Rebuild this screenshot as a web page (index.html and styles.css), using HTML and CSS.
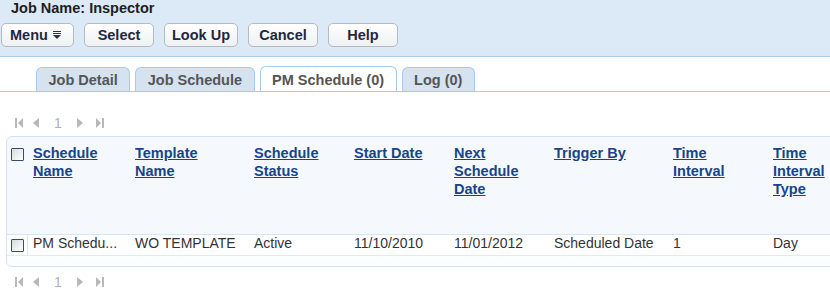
FILE: index.html
```html
<!DOCTYPE html>
<html>
<head>
<meta charset="utf-8">
<link rel="stylesheet" href="styles.css">
</head>
<body>
<div class="header">
  <div class="title">Job Name: Inspector</div>
  <div class="toolbar">
    <button class="btn btn-menu">Menu <svg class="menu-ico" width="8" height="8" viewBox="0 0 8 8"><rect x="0" y="0" width="8" height="1"/><rect x="0" y="2" width="8" height="1"/><polygon points="0,4 8,4 4,8"/></svg></button>
    <button class="btn">Select</button>
    <button class="btn">Look Up</button>
    <button class="btn">Cancel</button>
    <button class="btn">Help</button>
  </div>
</div>

<div class="tabs">
  <div class="tab">Job Detail</div>
  <div class="tab">Job Schedule</div>
  <div class="tab active">PM Schedule (0)</div>
  <div class="tab">Log (0)</div>
</div>

<div class="pager pager-top">
  <svg class="pg pg-first" width="8" height="10" viewBox="0 0 8 10"><rect x="0" y="0" width="2" height="10"/><polygon points="8,0 3,5 8,10"/></svg>
  <svg class="pg pg-prev" width="7" height="10" viewBox="0 0 7 10"><polygon points="7,0 1,5 7,10"/></svg>
  <span class="pg-num">1</span>
  <svg class="pg pg-next" width="7" height="10" viewBox="0 0 7 10"><polygon points="0,0 6,5 0,10"/></svg>
  <svg class="pg pg-last" width="8" height="10" viewBox="0 0 8 10"><polygon points="0,0 5,5 0,10"/><rect x="6" y="0" width="2" height="10"/></svg>
</div>

<div class="grid-wrap">
  <div class="grid">
    <div class="th th-cb"><span class="cb"></span></div>
    <div class="th"><a href="#">Schedule Name</a></div>
    <div class="th"><a href="#">Template Name</a></div>
    <div class="th"><a href="#">Schedule Status</a></div>
    <div class="th"><a href="#">Start Date</a></div>
    <div class="th"><a href="#">Next Schedule Date</a></div>
    <div class="th"><a href="#">Trigger By</a></div>
    <div class="th"><a href="#">Time Interval</a></div>
    <div class="th"><a href="#">Time Interval Type</a></div>

    <div class="td td-cb"><span class="cb"></span></div>
    <div class="td">PM Schedu...</div>
    <div class="td">WO TEMPLATE</div>
    <div class="td">Active</div>
    <div class="td">11/10/2010</div>
    <div class="td">11/01/2012</div>
    <div class="td">Scheduled Date</div>
    <div class="td">1</div>
    <div class="td">Day</div>
  </div>
  <div class="grid-foot"></div>
</div>

<div class="pager pager-bottom">
  <svg class="pg pg-first" width="8" height="10" viewBox="0 0 8 10"><rect x="0" y="0" width="2" height="10"/><polygon points="8,0 3,5 8,10"/></svg>
  <svg class="pg pg-prev" width="7" height="10" viewBox="0 0 7 10"><polygon points="7,0 1,5 7,10"/></svg>
  <span class="pg-num">1</span>
  <svg class="pg pg-next" width="7" height="10" viewBox="0 0 7 10"><polygon points="0,0 6,5 0,10"/></svg>
  <svg class="pg pg-last" width="8" height="10" viewBox="0 0 8 10"><polygon points="0,0 5,5 0,10"/><rect x="6" y="0" width="2" height="10"/></svg>
</div>
</body>
</html>
```

FILE: styles.css
```css
html, body {
  margin: 0;
  padding: 0;
  overflow: hidden;
  background: #fff;
  font-family: "Liberation Sans", Arial, sans-serif;
  font-size: 14px;
  color: #333;
}

.header {
  background: #dce9f6;
  border-bottom: 1px solid #aacbe9;
  height: 57px;
  box-sizing: border-box;
}

.title {
  font-weight: bold;
  font-size: 14.5px;
  line-height: 17px;
  color: #1e1e1e;
  padding-left: 11px;
}

.toolbar {
  display: flex;
  gap: 10px;
  margin-top: 6px;
  padding-left: 1px;
}

.btn {
  box-sizing: border-box;
  height: 24px;
  min-width: 70px;
  padding: 0 7px;
  border: 1px solid #b4bac2;
  border-radius: 5px;
  background: linear-gradient(#ffffff, #eef0f3);
  font-family: "Liberation Sans", Arial, sans-serif;
  font-weight: bold;
  font-size: 14.5px;
  color: #1f2840;
  display: flex;
  align-items: center;
  justify-content: center;
}

.btn-menu {
  width: 73px;
  padding: 0 8px;
  justify-content: flex-start;
  gap: 5px;
}

.menu-ico {
  fill: #2a3348;
}

.tabs {
  display: flex;
  gap: 5px;
  margin-top: 10px;
  padding-left: 36px;
  border-bottom: 1px solid #a9c9e8;
  height: 24px;
}

.tab {
  box-sizing: border-box;
  height: 24px;
  padding: 0 11.5px;
  border: 1px solid #a9c9e8;
  border-bottom: none;
  border-radius: 6px 6px 0 0;
  background: #d5e2f0;
  font-weight: bold;
  font-size: 14.5px;
  color: #555;
  display: flex;
  align-items: center;
}

.tab.active {
  background: #fff;
  height: 25px;
  margin-top: -1px;
  padding-top: 1px;
}

.pager {
  display: flex;
  align-items: center;
  height: 14px;
  padding-left: 15px;
  color: #b5b5b5;
}

.pager-top {
  margin-top: 24px;
}

.pager-bottom {
  margin-top: 8px;
}

.pg {
  fill: #b8b8b8;
}

.pg-prev { margin-left: 9px; }
.pg-num {
  margin-left: 15px;
  font-size: 14px;
  color: #b0b0b0;
}
.pg-next { margin-left: 15px; }
.pg-last { margin-left: 12px; }

.grid-wrap {
  margin-top: 6px;
  margin-left: 6px;
  width: 863px;
  box-sizing: border-box;
  border: 1px solid #d4e3f3;
  border-radius: 6px;
  background: #f5f9fd;
  overflow: hidden;
}

.grid {
  display: grid;
  grid-template-columns: 21px 102px 119px 100px 100px 100px 119px 100px 100px;
}

.th {
  box-sizing: border-box;
  height: 98px;
  padding: 7px 12px 0 5px;
  border-bottom: 1px solid #d6e5f3;
  font-weight: bold;
  font-size: 14.5px;
  line-height: 18px;
}

.th a {
  color: #17448a;
  text-decoration: underline;
}

.th-cb {
  padding: 11px 0 0 4px;
}

.td {
  box-sizing: border-box;
  height: 21px;
  padding: 0 0 0 5px;
  background: #fff;
  border-bottom: 1px solid #e2eaf2;
  line-height: 17px;
  font-size: 14px;
  color: #333;
  white-space: nowrap;
  overflow: hidden;
}

.td-cb {
  padding: 4px 0 0 4px;
  border-right: 1px solid #dfe6ee;
}

.cb {
  display: block;
  box-sizing: border-box;
  width: 13px;
  height: 13px;
  border: 1px solid #3a4d68;
  border-radius: 1px;
  background: linear-gradient(135deg, #d6dbe2, #ffffff);
}

.grid-foot {
  height: 10px;
  background: #fbfdff;
}
```
